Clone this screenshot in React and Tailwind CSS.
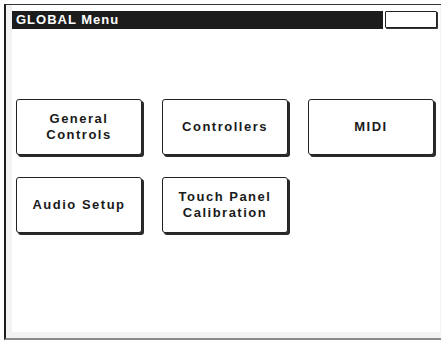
import React from "react";

const font = { fontFamily: '"Liberation Sans", Arial, sans-serif' };

function MenuButton({ lines }) {
  return (
    <button
      className="flex h-[56px] w-[126px] flex-col items-center justify-center rounded-[3px] border border-[#222] bg-white text-[13px] font-bold leading-[16px] tracking-[1.5px] text-[#1a1a1a] shadow-[2px_2px_0_#2a2a2a]"
      style={font}
    >
      {lines.map((l) => (
        <span key={l}>{l}</span>
      ))}
    </button>
  );
}

export default function App() {
  return (
    <div className="h-[340px] w-[441px] bg-white pl-[4px] pt-[4px]">
      <div className="flex h-[336px] w-[437px] flex-col border-b-2 border-l-2 border-t border-b-[#8a8a8a] border-l-[#1e1e1e] border-t-[#333] bg-[#f3f3f3]">
        <div className="ml-[6px] mr-[1px] flex-1 bg-white pt-[6px]">
          {/* Title bar */}
          <div className="flex items-stretch gap-[2px]">
            <div
              className="flex h-[18px] w-[371px] items-center bg-[#1c1c1c] pl-[4px] text-[13px] font-bold tracking-[1px] text-white"
              style={font}
            >
              GLOBAL Menu
            </div>
            <div className="h-[17px] w-[52px] rounded-[1px] border border-[#222] bg-white shadow-[1px_1px_0_#333]" />
          </div>

          {/* Buttons */}
          <div className="ml-[4px] mt-[70px] grid w-[420px] grid-cols-[126px_126px_126px] gap-x-[20px] gap-y-[22px]">
            <MenuButton lines={["General", "Controls"]} />
            <MenuButton lines={["Controllers"]} />
            <MenuButton lines={["MIDI"]} />
            <MenuButton lines={["Audio Setup"]} />
            <MenuButton lines={["Touch Panel", "Calibration"]} />
          </div>
        </div>
        <div className="h-[6px]" />
      </div>
    </div>
  );
}
